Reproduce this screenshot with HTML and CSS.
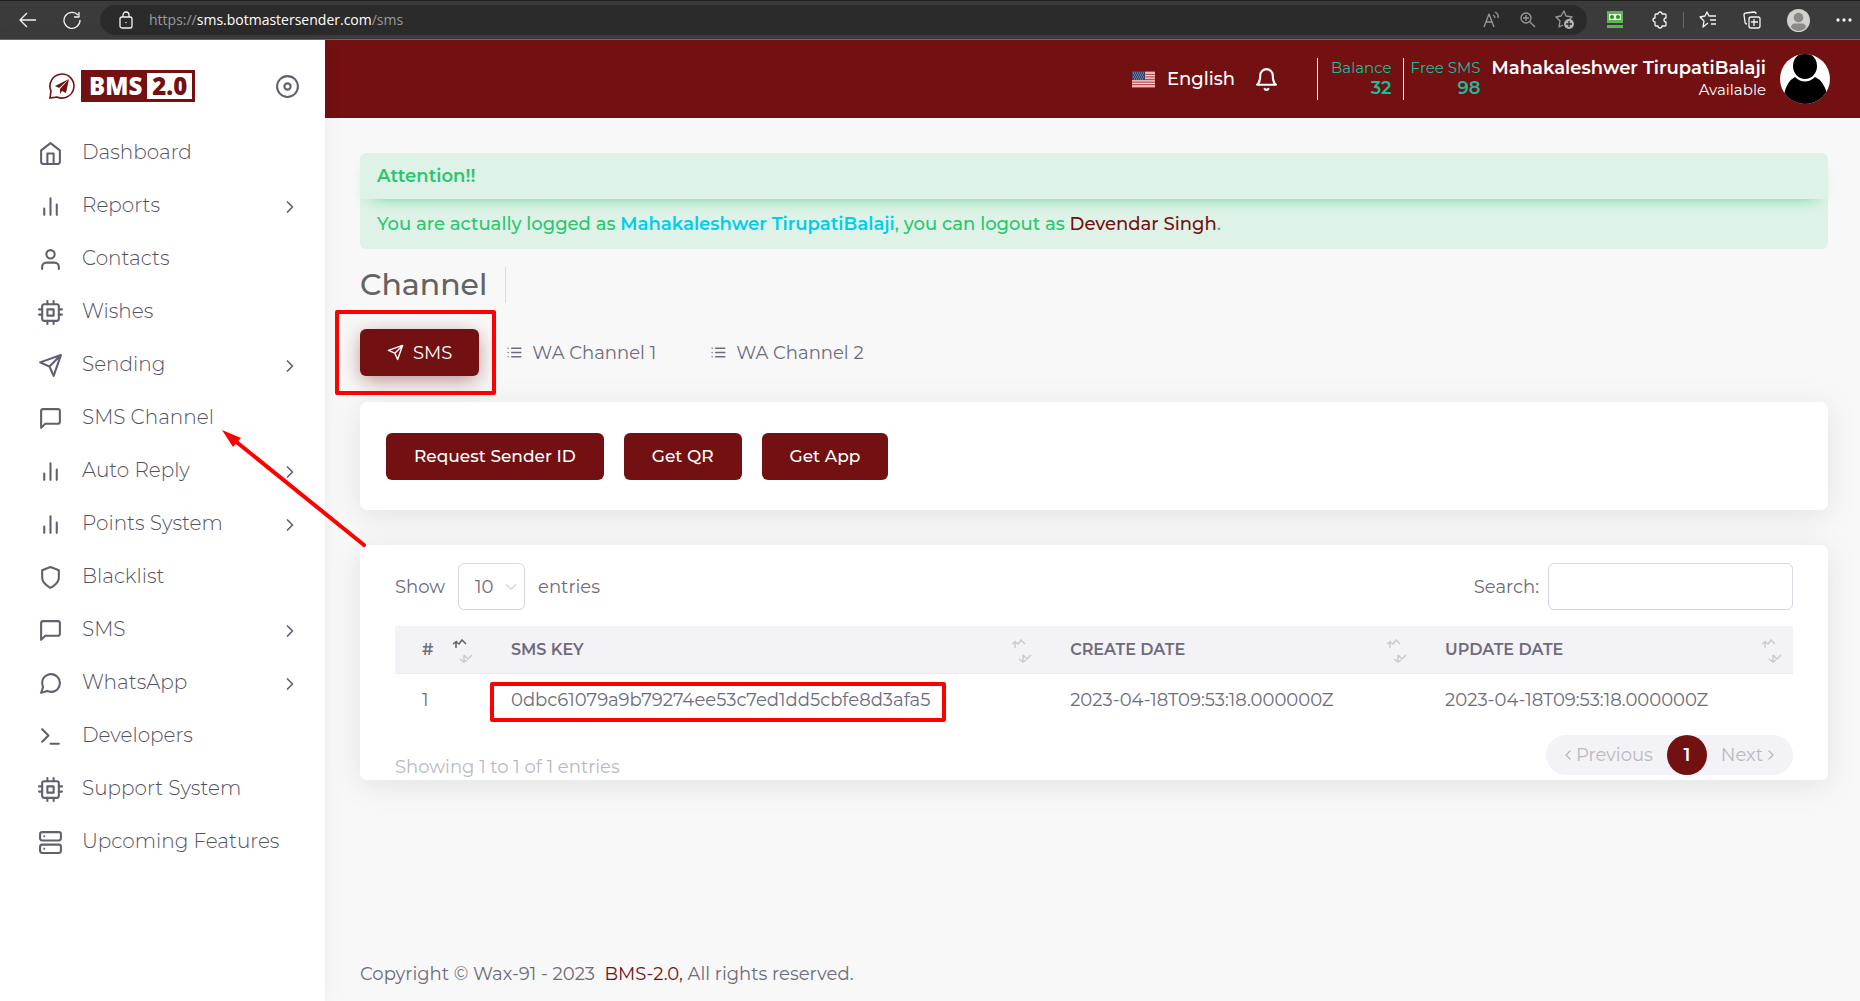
FILE: index.html
```html
<!DOCTYPE html>
<html lang="en">
<head>
<meta charset="utf-8">
<meta name="viewport" content="width=device-width, initial-scale=1">
<title>BMS 2.0 - Channel</title>
<link rel="stylesheet" href="styles.css">
</head>
<body>
<svg class="sprite" aria-hidden="true">
  <symbol id="home" viewBox="0 0 24 24"><path d="M3 9l9-7 9 7v11a2 2 0 0 1-2 2H5a2 2 0 0 1-2-2z"/><path d="M9 22V12h6v10"/></symbol>
  <symbol id="bars" viewBox="0 0 24 24"><path d="M18 20V10M12 20V4M6 20v-6"/></symbol>
  <symbol id="user" viewBox="0 0 24 24"><path d="M20 21v-2a4 4 0 0 0-4-4H8a4 4 0 0 0-4 4v2"/><circle cx="12" cy="7" r="4"/></symbol>
  <symbol id="cpu" viewBox="0 0 24 24"><rect x="4" y="4" width="16" height="16" rx="2"/><path d="M9 9h6v6H9zM9 1v3M15 1v3M9 20v3M15 20v3M20 9h3M20 14h3M1 9h3M1 14h3"/></symbol>
  <symbol id="send" viewBox="0 0 24 24"><path d="M22 2L11 13M22 2l-7 20-4-9-9-4z"/></symbol>
  <symbol id="message" viewBox="0 0 24 24"><path d="M21 15a2 2 0 0 1-2 2H7l-4 4V5a2 2 0 0 1 2-2h14a2 2 0 0 1 2 2z"/></symbol>
  <symbol id="circle-message" viewBox="0 0 24 24"><path d="M21 11.5a8.38 8.38 0 0 1-.9 3.8 8.5 8.5 0 0 1-7.6 4.7 8.38 8.38 0 0 1-3.8-.9L3 21l1.9-5.7a8.38 8.38 0 0 1-.9-3.8 8.5 8.5 0 0 1 4.7-7.6 8.38 8.38 0 0 1 3.8-.9h.5a8.48 8.48 0 0 1 8 8z"/></symbol>
  <symbol id="shield" viewBox="0 0 24 24"><path d="M12 22s8-4 8-10V5l-8-3-8 3v7c0 6 8 10 8 10z"/></symbol>
  <symbol id="terminal" viewBox="0 0 24 24"><path d="M4 17l6-6-6-6M12 19h8"/></symbol>
  <symbol id="server" viewBox="0 0 24 24"><rect x="2" y="2" width="20" height="8" rx="2"/><rect x="2" y="14" width="20" height="8" rx="2"/><path d="M6 6h.01M6 18h.01"/></symbol>
  <symbol id="disc" viewBox="0 0 24 24"><circle cx="12" cy="12" r="10"/><circle cx="12" cy="12" r="3"/></symbol>
  <symbol id="bell" viewBox="0 0 24 24"><path d="M18 8A6 6 0 0 0 6 8c0 7-3 9-3 9h18s-3-2-3-9M13.73 21a2 2 0 0 1-3.46 0"/></symbol>
  <symbol id="list" viewBox="0 0 24 24"><path d="M8 6h13M8 12h13M8 18h13M3 6h.01M3 12h.01M3 18h.01"/></symbol>
  <symbol id="right" viewBox="0 0 24 24"><path d="M9 18l6-6-6-6"/></symbol>
  <symbol id="left" viewBox="0 0 24 24"><path d="M15 18l-6-6 6-6"/></symbol>
  <symbol id="down" viewBox="0 0 24 24"><path d="M6 9l6 6 6-6"/></symbol>
  <symbol id="sort-up" viewBox="0 0 21 9"><path d="M1 5l4-3M4 3v6M4 3l3 2 3-4 4 4" /></symbol>
  <symbol id="sort-down" viewBox="0 0 21 9"><path d="M12 1v7M8 5l4 3 3-2M12 1l4 4 4-4"/></symbol>
</svg>

<div class="browser">
  <button class="tool" aria-label="Back"><svg width="18" height="18" viewBox="0 0 18 18"><path d="M17 9H2M8 2L1 9l7 7"/></svg></button>
  <button class="tool" aria-label="Reload"><svg width="18" height="18" viewBox="0 0 18 18"><path d="M15 4a8 8 0 1 0 2 5M16 1v5h-5"/></svg></button>
  <div class="address">
    <svg width="14" height="18" viewBox="0 0 14 18"><rect x="1" y="6" width="12" height="11" rx="2"/><path d="M4 6V4a3 3 0 0 1 6 0v2M7 11v1"/></svg>
    <span class="url">https://<b>sms.botmastersender.com</b>/sms</span>
    <span class="address-tools">
      <svg width="18" height="18" viewBox="0 0 18 18"><path d="M1 16L6 3l5 13M3 11h6M10 4q2 1 2 3M12 1q4 2 3 6"/></svg>
      <svg width="18" height="18" viewBox="0 0 18 18"><circle cx="7" cy="7" r="5"/><path d="M11 11l5 5M7 4v6M4 7h6"/></svg>
      <svg width="20" height="20" viewBox="0 0 20 20"><path d="M8 15l-4 2 1-6-4-4 5-1 3-5 2 5 6 1-3 3"/><circle class="solid" cx="14" cy="14" r="5"/><path class="cut" d="M14 11v6M11 14h6"/></svg>
    </span>
  </div>
  <svg class="robot" width="18" height="18" viewBox="0 0 18 18"><path fill="#5cb650" d="M1 0h16v12H1zM1 14h16v3H1z"/><path fill="#e8f7e2" d="M3 3h12v6H3z"/><circle cx="6" cy="6" r="2" fill="#258e22"/><circle cx="12" cy="6" r="2" fill="#258e22"/></svg>
  <button class="tool" aria-label="Extensions"><svg width="18" height="18" viewBox="0 0 18 18"><path d="M5 3h2a2 2 0 0 1 4 0h3q1 0 1 1v3a2 2 0 0 0 0 4v3q0 1-1 1h-3a2 2 0 0 1-4 0H5q-1 0-1-1v-3a2 2 0 0 1 0-4V4q0-1 1-1z"/></svg></button>
  <span class="tool-line"></span>
  <button class="tool" aria-label="Favorites"><svg width="18" height="18" viewBox="0 0 18 18"><path d="M9 12l-5 4 1-6-4-4 5-1 2-4 2 4h7M11 9h6M12 13h5"/></svg></button>
  <button class="tool" aria-label="Collections"><svg width="18" height="18" viewBox="0 0 18 18"><rect x="6" y="6" width="11" height="11" rx="2"/><path d="M11 8v7M8 11h7M4 13q-2 0-2-2L1 4q0-2 2-2l8-1q2 0 2 2"/></svg></button>
  <svg class="profile" width="23" height="23" viewBox="0 0 24 24"><circle cx="12" cy="12" r="12" fill="#d2d0cc"/><circle cx="12" cy="9" r="5" fill="#8b8986"/><path fill="#8b8986" d="M4 19q1-4 4-4h8q3 0 4 4-8 8-16 0"/></svg>
  <button class="tool dots" aria-label="Settings"><svg width="16" height="4" viewBox="0 0 16 4"><circle cx="2" cy="2" r="1"/><circle cx="8" cy="2" r="1"/><circle cx="14" cy="2" r="1"/></svg></button>
</div>

<div class="app">
  <aside class="sidebar">
    <div class="brand">
      <a class="logo" href="#">
        <svg width="28" height="28" viewBox="0 0 28 28"><path fill="none" stroke="#731011" stroke-width="1.6" d="M2 26l1-7A12 12 0 1 1 9 25z"/><path fill="#731011" d="M21 7L7 14l4 2zM21 7l-9 10v5l2-3 4 2z"/></svg>
        <span class="logo-box">BMS<span class="logo-version">2.0</span></span>
      </a>
      <button class="collapse" aria-label="Collapse menu"><svg class="icon"><use href="#disc"/></svg></button>
    </div>
    <nav class="menu">
      <a href="#"><svg class="icon"><use href="#home"/></svg><span>Dashboard</span></a>
      <a href="#"><svg class="icon"><use href="#bars"/></svg><span>Reports</span><svg class="icon chevron"><use href="#right"/></svg></a>
      <a href="#"><svg class="icon"><use href="#user"/></svg><span>Contacts</span></a>
      <a href="#"><svg class="icon"><use href="#cpu"/></svg><span>Wishes</span></a>
      <a href="#"><svg class="icon"><use href="#send"/></svg><span>Sending</span><svg class="icon chevron"><use href="#right"/></svg></a>
      <a href="#" class="pointed"><svg class="icon"><use href="#message"/></svg><span>SMS Channel</span>
        <svg class="arrow" width="150" height="120" viewBox="0 0 150 120"><path d="M144 117L14 12" fill="none" stroke="#f00" stroke-width="4" stroke-linecap="round"/><path d="M2 2l19 8-8 9z" fill="#f00"/></svg></a>
      <a href="#"><svg class="icon"><use href="#bars"/></svg><span>Auto Reply</span><svg class="icon chevron"><use href="#right"/></svg></a>
      <a href="#"><svg class="icon"><use href="#bars"/></svg><span>Points System</span><svg class="icon chevron"><use href="#right"/></svg></a>
      <a href="#"><svg class="icon"><use href="#shield"/></svg><span>Blacklist</span></a>
      <a href="#"><svg class="icon"><use href="#message"/></svg><span>SMS</span><svg class="icon chevron"><use href="#right"/></svg></a>
      <a href="#"><svg class="icon"><use href="#circle-message"/></svg><span>WhatsApp</span><svg class="icon chevron"><use href="#right"/></svg></a>
      <a href="#"><svg class="icon"><use href="#terminal"/></svg><span>Developers</span></a>
      <a href="#"><svg class="icon"><use href="#cpu"/></svg><span>Support System</span></a>
      <a href="#"><svg class="icon"><use href="#server"/></svg><span>Upcoming Features</span></a>
    </nav>
  </aside>

  <div class="page">
    <header class="topbar">
      <a class="language" href="#">
        <svg width="23" height="17" viewBox="0 0 23 17"><path fill="#f2dcdc" d="M0 0h23v17H0z"/><path stroke="#c0484c" stroke-width="1.3" d="M0 .7h23M0 3.3h23M0 5.9h23M0 8.5h23M0 11.1h23M0 13.7h23M0 16.3h23"/><path fill="#34466f" d="M0 0h13v9H0z"/><path stroke="#9aa7c4" stroke-dasharray="1 1" d="M1 2h11M2 4h10M1 6h11M2 8h10"/></svg>
        English</a>
      <button class="bell" aria-label="Notifications"><svg class="icon"><use href="#bell"/></svg></button>
      <div class="stat"><span>Balance</span><strong>32</strong></div>
      <div class="stat"><span>Free SMS</span><strong>98</strong></div>
      <div class="account"><strong>Mahakaleshwer TirupatiBalaji</strong><span>Available</span></div>
      <svg class="avatar" width="50" height="50" viewBox="0 0 50 50"><clipPath id="round"><circle cx="25" cy="25" r="25"/></clipPath><g clip-path="url(#round)"><path fill="#fff" d="M0 0h50v50H0z"/><path d="M4 40q3-13 11-17 10 9 20 0 9 4 12 17l-8 10H12z"/><ellipse cx="25" cy="12" rx="13" ry="14" stroke="#fff" stroke-width="2"/></g></svg>
    </header>

    <main class="content">
      <section class="alert">
        <h4>Attention!!</h4>
        <p>You are actually logged as <b>Mahakaleshwer TirupatiBalaji</b>, you can logout as <a href="#">Devendar Singh</a>.</p>
      </section>
      <h1>Channel</h1>
      <div class="tabs">
        <div class="marked marked-tab"><button class="tab active"><svg class="icon"><use href="#send"/></svg>SMS</button></div>
        <button class="tab"><svg class="icon"><use href="#list"/></svg>WA Channel 1</button>
        <button class="tab"><svg class="icon"><use href="#list"/></svg>WA Channel 2</button>
      </div>
      <section class="card actions">
        <button>Request Sender ID</button>
        <button>Get QR</button>
        <button>Get App</button>
      </section>
      <section class="card listing">
        <div class="controls">
          <div class="length">
            <label for="length">Show</label>
            <span class="select"><select id="length"><option>10</option></select><svg class="icon"><use href="#down"/></svg></span>
            <span>entries</span>
          </div>
          <div class="search"><label for="search">Search:</label><input id="search" type="search"></div>
        </div>
        <table>
          <colgroup><col class="col-number"><col class="col-key"><col><col></colgroup>
          <thead>
            <tr>
              <th><div>#<span class="sort asc"><svg><use href="#sort-up"/></svg><svg><use href="#sort-down"/></svg></span></div></th>
              <th><div>SMS KEY<span class="sort"><svg><use href="#sort-up"/></svg><svg><use href="#sort-down"/></svg></span></div></th>
              <th><div>CREATE DATE<span class="sort"><svg><use href="#sort-up"/></svg><svg><use href="#sort-down"/></svg></span></div></th>
              <th><div>UPDATE DATE<span class="sort"><svg><use href="#sort-up"/></svg><svg><use href="#sort-down"/></svg></span></div></th>
            </tr>
          </thead>
          <tbody>
            <tr><td>1</td><td><span class="marked marked-key">0dbc61079a9b79274ee53c7ed1dd5cbfe8d3afa5</span></td><td>2023-04-18T09:53:18.000000Z</td><td>2023-04-18T09:53:18.000000Z</td></tr>
          </tbody>
        </table>
        <div class="summary">
          <span class="info">Showing 1 to 1 of 1 entries</span>
          <div class="pagination">
            <button><svg class="icon"><use href="#left"/></svg>Previous</button>
            <button class="current">1</button>
            <button>Next<svg class="icon"><use href="#right"/></svg></button>
          </div>
        </div>
      </section>
    </main>
    <footer>Copyright © Wax-91 - 2023 &nbsp;<a href="#">BMS-2.0,</a> All rights reserved.</footer>
  </div>
</div>
</body>
</html>
```
FILE: styles.css
```css
:root {
  --maroon: #731011;
  --text: #6e6b7b;
  --ink: #625f6e;
  --muted: #b9b9c3;
  --line: #d8d6de;
  --band: #f3f2f7;
}
* { box-sizing: border-box; }
body {
  margin: 0;
  min-height: 100vh;
  display: flex;
  flex-direction: column;
  background: #f8f8f8;
  color: var(--text);
  font: 400 18px/24px Montserrat, Inter, sans-serif;
}
button, input, select { font: inherit; color: inherit; }
button { border: 0; padding: 0; background: none; cursor: pointer; }
a { color: inherit; text-decoration: none; }
h1, h4, p { margin: 0; }
svg { flex: none; display: block; }
.sprite { position: absolute; width: 0; height: 0; }
.icon {
  width: 25px;
  height: 25px;
  fill: none;
  stroke: currentColor;
  stroke-width: 2;
  stroke-linecap: round;
  stroke-linejoin: round;
}

/* Browser toolbar */
.browser {
  height: 40px;
  flex: none;
  display: flex;
  align-items: center;
  padding: 0 8px 0 19px;
  background: #3b3b3b;
  border-top: 1px solid #1f1f1f;
  border-bottom: 1px solid #6c6c6c;
  color: #f4f4f4;
}
.tool svg, .address svg { fill: none; stroke: currentColor; stroke-width: 1.3; stroke-linejoin: round; }
.tool { margin-right: 26px; }
.address {
  flex: 1;
  height: 30px;
  display: flex;
  align-items: center;
  gap: 16px;
  margin: 0 19px 0 -7px;
  padding: 0 12px 0 19px;
  border-radius: 15px;
  background: #2b2b2b;
}
.url { font: 14px/20px "Open Sans", sans-serif; color: #9a9a9a; }
.url b { font-weight: 400; color: #fff; }
.address-tools { display: flex; align-items: center; gap: 18px; margin-left: auto; color: #9a9a9a; }
.address .solid { fill: #b4b4b4; stroke: none; }
.address .cut { stroke: #2b2b2b; }
.robot { margin-right: 27px; }
.browser .robot + .tool { margin-right: 14px; }
.tool-line { width: 1px; height: 16px; margin-right: 15px; background: #686868; }
.profile { margin-right: 26px; }
.dots { margin: 0; }
.dots svg { fill: currentColor; }

/* Sidebar */
.app { flex: 1; display: flex; }
.sidebar {
  width: 325px;
  flex: none;
  background: #fff;
  color: var(--ink);
  box-shadow: 0 0 19px rgba(34, 41, 47, .06);
  z-index: 1;
}
.brand { display: flex; justify-content: space-between; align-items: center; padding: 30px 25px 25px 48px; }
.logo { display: flex; align-items: center; gap: 5px; }
.logo-box {
  display: flex;
  align-items: center;
  gap: 5px;
  padding: 3px 3px 3px 8px;
  background: var(--maroon);
  color: #fff;
  font: 800 24px/26px "Open Sans", sans-serif;
}
.logo-version { padding: 0 5px; background: #fff; color: var(--maroon); }
.menu a {
  height: 53px;
  display: flex;
  align-items: center;
  gap: 19px;
  padding: 0 25px 0 38px;
  font-size: 20px;
  font-weight: 300;
}
.menu span { padding-bottom: 3px; color: #54515f; }
.menu .chevron { width: 20px; height: 20px; margin-left: auto; }
.pointed { position: relative; }
.arrow { position: absolute; left: 220px; top: 36px; pointer-events: none; }

/* Top bar */
.page { flex: 1; min-width: 0; display: flex; flex-direction: column; }
.topbar {
  height: 78px;
  display: flex;
  align-items: center;
  justify-content: flex-end;
  padding: 0 30px;
  background: var(--maroon);
  color: #fff;
}
.language { display: flex; align-items: center; gap: 12px; font-size: 18px; font-weight: 500; }
.bell { margin: 0 38px 0 19px; }
.stat {
  display: flex;
  flex-direction: column;
  align-items: flex-end;
  padding: 0 11px 2px 7px;
  border-left: 1px solid #fff;
  color: #1abc9c;
  font-size: 15px;
  line-height: 20px;
}
.bell + .stat { padding-left: 13px; }
.stat strong { font-size: 18px; font-weight: 600; }
.account { display: flex; flex-direction: column; align-items: flex-end; font-size: 15px; line-height: 22px; }
.account strong { font-size: 18px; font-weight: 600; }
.avatar { margin-left: 14px; }

/* Content */
.content { padding: 35px 32px 40px 35px; }
.alert { border-radius: 6px; background: #dff2e7; color: #28c76f; font-weight: 500; }
.alert h4 {
  padding: 11px 17px;
  border-radius: 6px 6px 0 0;
  font-size: 18px;
  line-height: 24px;
  font-weight: 600;
  box-shadow: 0 8px 18px -12px #28c76f;
}
.alert p { padding: 13px 17px; }
.alert b { color: #00cfe8; font-weight: 600; }
.alert a { color: var(--maroon); }
h1 {
  width: fit-content;
  margin: 18px 0 26px;
  padding-right: 18px;
  border-right: 1px solid #d6dce1;
  color: #636363;
  font-size: 30px;
  line-height: 36px;
  font-weight: 500;
}
.tabs { display: flex; margin-bottom: 26px; }
.tab { height: 47px; display: flex; align-items: center; gap: 9px; padding: 0 27px; }
.tab .icon { width: 17px; height: 17px; }
.tab.active {
  border-radius: 6px;
  background: var(--maroon);
  color: #fff;
  box-shadow: 0 5px 20px -2px rgba(115, 16, 17, .5);
}
.marked { position: relative; }
.marked::after {
  content: "";
  position: absolute;
  border: 4px solid #f00;
  border-radius: 2px;
  pointer-events: none;
}
.marked-tab::after { inset: -19px -17px -19px -25px; }
.marked-key::after { inset: -7px -16px -11px -21px; }
.card { border-radius: 7px; background: #fff; box-shadow: 0 5px 30px rgba(34, 41, 47, .1); }
.actions { display: flex; gap: 20px; margin-bottom: 35px; padding: 31px 26px 30px; }
.actions button {
  height: 47px;
  padding: 0 28px 2px;
  border-radius: 6px;
  background: var(--maroon);
  color: #fff;
  font-size: 17px;
  font-weight: 500;
}
.listing { padding: 18px 35px 3px; }
.controls { display: flex; justify-content: space-between; margin-bottom: 16px; }
.length, .search { display: flex; align-items: center; }
.length { gap: 13px; }
.search { gap: 9px; }
.select { display: grid; align-items: center; }
.select > * { grid-area: 1 / 1; }
.select .icon { width: 18px; height: 18px; margin-right: 5px; justify-self: end; color: var(--line); pointer-events: none; }
.select select, .search input {
  height: 47px;
  border: 1px solid var(--line);
  border-radius: 6px;
  background: #fff;
  outline: 0;
}
.select select { width: 67px; padding: 0 16px; appearance: none; }
.search input { width: 245px; padding: 0 16px; }
table { width: 100%; table-layout: fixed; border-collapse: collapse; }
.col-number { width: 89px; }
.col-key { width: 40%; }
th {
  padding: 11px 11px 10px 27px;
  border-bottom: 1px solid #ebe9f1;
  background: var(--band);
  font-size: 16px;
  font-weight: 600;
  text-align: left;
}
th div { display: flex; align-items: center; justify-content: space-between; }
.sort { display: flex; flex-direction: column; gap: 6px; padding-top: 2px; color: #cbc9d3; }
.sort svg { width: 21px; height: 9px; fill: none; stroke: currentColor; stroke-width: 1.5; }
.sort.asc svg:first-child { color: var(--ink); }
td { padding: 14px 27px 19px; white-space: nowrap; }
.summary { display: flex; justify-content: space-between; padding-top: 4px; }
.info { padding-top: 22px; line-height: 20px; color: var(--muted); }
.pagination { height: 40px; display: flex; align-items: center; padding: 0 14px; border-radius: 20px; background: var(--band); color: var(--muted); }
.pagination button { display: flex; align-items: center; }
.pagination .icon { width: 16px; height: 16px; }
.pagination .current {
  width: 40px;
  height: 40px;
  justify-content: center;
  margin: 0 14px;
  border-radius: 50%;
  background: var(--maroon);
  color: #fff;
  font-weight: 600;
}
footer { margin-top: auto; padding: 15px 35px; }
footer a { color: var(--maroon); }
```
